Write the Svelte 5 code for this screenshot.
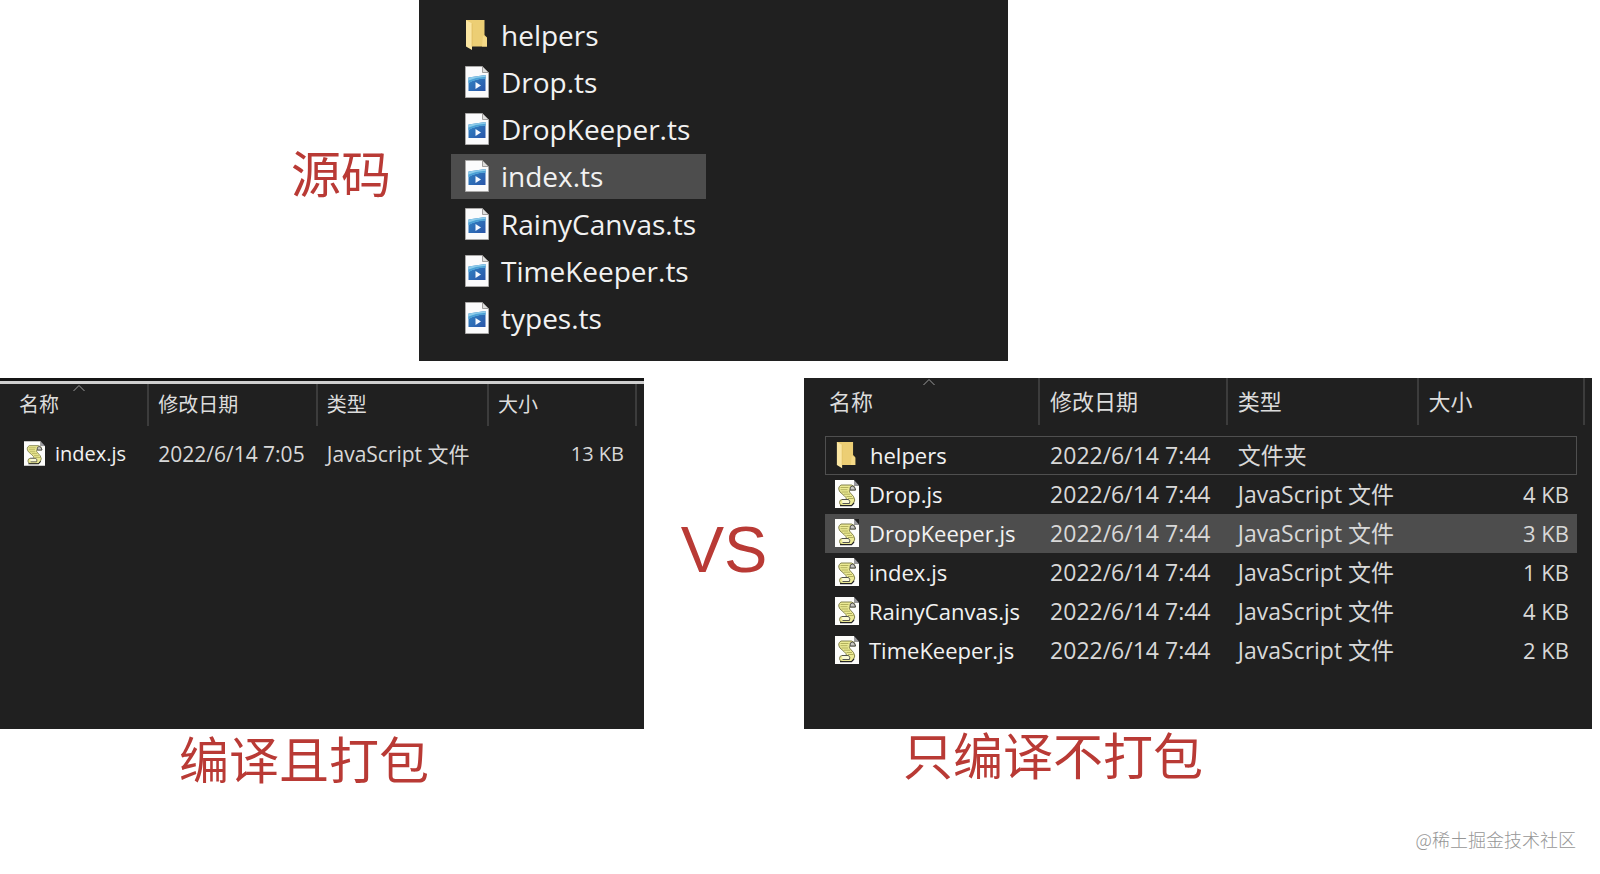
<script>
  const sources = [
    { name: 'helpers', folder: true },
    { name: 'Drop.ts' },
    { name: 'DropKeeper.ts' },
    { name: 'index.ts', active: true },
    { name: 'RainyCanvas.ts' },
    { name: 'TimeKeeper.ts' },
    { name: 'types.ts' }
  ];
  const js = 'JavaScript 文件';
  const bundled = [{ name: 'index.js', date: '2022/6/14 7:05', type: js, size: '13 KB' }];
  const compiled = [
    { name: 'helpers', date: '2022/6/14 7:44', type: '文件夹', size: '', folder: true, focused: true },
    { name: 'Drop.js', date: '2022/6/14 7:44', type: js, size: '4 KB' },
    { name: 'DropKeeper.js', date: '2022/6/14 7:44', type: js, size: '3 KB', active: true },
    { name: 'index.js', date: '2022/6/14 7:44', type: js, size: '1 KB' },
    { name: 'RainyCanvas.js', date: '2022/6/14 7:44', type: js, size: '4 KB' },
    { name: 'TimeKeeper.js', date: '2022/6/14 7:44', type: js, size: '2 KB' }
  ];
</script>

{#snippet folderIcon()}
  <svg class="icon" viewBox="0 0 24 32" preserveAspectRatio="xMinYMid meet" aria-hidden="true">
    <path d="M1 1H19.500V16L22 18.500V27.500H5Z" fill="#ecce74" />
    <path d="M18 16.500L22 19V27.500H17Z" fill="#f5da88" />
    <path d="M1 1L7 4.500V31L1 27.500Z" fill="#fbe6a2" />
    <path d="M7 4.500V27.500" stroke="#d9b452" stroke-width=".6" />
  </svg>
{/snippet}

{#snippet mediaIcon()}
  <svg class="icon" viewBox="0 0 24 32" aria-hidden="true">
    <defs>
      <linearGradient id="screen" x1="0" y1="0" x2="1" y2="1">
        <stop offset="0" stop-color="#3187c6" />
        <stop offset="1" stop-color="#2a55a8" />
      </linearGradient>
    </defs>
    <path d="M.5 .5H17.500L23.500 6.500V31.500H.5Z" fill="#fbfbfc" stroke="#aaa9a8" />
    <path d="M17.500 .5V6.500H23.500Z" fill="#dededd" stroke="#8b8987" stroke-width=".8" />
    <path d="M3.500 11.500L20.500 9V25H3.500Z" fill="url(#screen)" />
    <path d="M3.500 11.500L20.500 9V12.500Q11 12.500 3.500 17Z" fill="#8ccbea" />
    <path d="M3.500 14.500Q12 10.500 20.500 11V12.500Q11 12.500 3.500 17Z" fill="#4aa0d5" />
    <path d="M10.500 16L16 19.500L10.500 23Z" fill="#f4f9ff" />
  </svg>
{/snippet}

{#snippet scriptIcon()}
  <svg class="icon" viewBox="0 0 24 28" aria-hidden="true">
    <path d="M0 0H19L24 5.500V28H0Z" fill="#fdfdfb" />
    <path d="M19 0V5.500H24V0Z" fill="#202020" />
    <path d="M19 0V5.500H24Z" fill="#9a9a9e" />
    <path d="M6 5H16.500Q20 5.500 20.500 10H15.500Q13.500 10 14.500 12L18.500 16.500Q21 20 18.500 23.500L16.500 25.500H7Q4.500 25 4.500 22.500Q4.700 19.500 7 19.500H11.500Q11.500 17.500 9 15.500L5 12Q2 7.500 6 5Z" fill="#ecea94" stroke="#77763f" stroke-width=".9" />
    <path d="M5.500 7.500H13.500M5.500 9.700H12.500M6.500 12H13M9 14.200H15M11.500 16.500H17M13 18.500H18.500" stroke="#a3a14f" stroke-width=".8" />
    <path d="M15 10Q14.500 6 17.300 6Q20.300 6.500 20.500 10Z" fill="#c8c7c2" stroke="#3c3c3c" stroke-width=".9" />
    <path d="M7 19.500H13.500Q15.500 21 14.500 23.500H7.500" fill="#fbfad6" stroke="#444" stroke-width=".9" />
    <path d="M5 25.700H16.500L19 23" fill="none" stroke="#222" stroke-width="1.200" />
  </svg>
{/snippet}

{#snippet fileTable(rows, label)}
  <table aria-label={label}>
    <colgroup>
      <col class="c-name" /><col class="c-date" /><col class="c-type" /><col class="c-size" /><col class="c-end" />
    </colgroup>
    <thead>
      <tr>
        <th scope="col" aria-sort="ascending">
          <svg class="caret" viewBox="0 0 12 8" aria-hidden="true"><path d="M.5 7L6 1.500L11.500 7" fill="none" stroke="#9a9a9a" /></svg>
          名称
        </th>
        <th scope="col">修改日期</th>
        <th scope="col">类型</th>
        <th scope="col" colspan="2">大小</th>
      </tr>
    </thead>
    <tbody>
      {#each rows as row}
        <tr class:active={row.active} class:focused={row.focused}>
          <td>
            <span class="file">
              {#if row.folder}{@render folderIcon()}{:else}{@render scriptIcon()}{/if}
              {row.name}
            </span>
          </td>
          <td class="detail">{row.date}</td>
          <td class="detail">{row.type}</td>
          <td>{row.size}</td>
          <td></td>
        </tr>
      {/each}
    </tbody>
  </table>
{/snippet}

<main>
  <section class="top">
    <h2>源码</h2>
    <ul class="panel">
      {#each sources as item}
        <li class:active={item.active}>
          {#if item.folder}{@render folderIcon()}{:else}{@render mediaIcon()}{/if}
          {item.name}
        </li>
      {/each}
    </ul>
  </section>

  <section class="bottom">
    <figure class="bundled">
      <div class="panel">{@render fileTable(bundled, '编译且打包')}</div>
      <figcaption>编译且打包</figcaption>
    </figure>
    <p class="versus">VS</p>
    <figure class="compiled">
      <div class="panel">{@render fileTable(compiled, '只编译不打包')}</div>
      <figcaption>只编译不打包</figcaption>
    </figure>
  </section>

  <footer>@稀土掘金技术社区</footer>
</main>

<style>
  :global(body) {
    margin: 0;
    background: #fff;
  }

  main {
    font-family: 'Open Sans', 'Noto Sans CJK SC', sans-serif;
    color: #f2f2f2;
  }

  h2,
  figure,
  ul,
  p {
    margin: 0;
    padding: 0;
  }

  .panel {
    background: #202020;
  }

  .active {
    background: #4d4d4d;
  }

  h2,
  figcaption {
    color: #b93a35;
    font-family: 'Noto Sans CJK SC', sans-serif;
    font-size: 50px;
    font-weight: 400;
    line-height: 48px;
  }

  .top {
    display: grid;
    grid-template-columns: 419fr 589fr 592fr;
  }

  .top h2 {
    align-self: center;
    padding: 0 28px 20px 0;
    text-align: right;
  }

  .top ul {
    box-sizing: border-box;
    min-height: 361px;
    padding: 12px 32px 20px;
    list-style: none;
    display: flex;
    flex-direction: column;
    justify-content: space-between;
  }

  .top li {
    box-sizing: border-box;
    width: 255px;
    height: 45px;
    padding-left: 14px;
    display: flex;
    align-items: center;
    gap: 12px;
    font-size: 28px;
    line-height: 36px;
  }

  .icon {
    display: block;
    flex: none;
    width: 24px;
    height: 32px;
  }

  .bottom {
    display: grid;
    grid-template-columns: 644fr 160fr 788fr 8fr;
    margin-top: 17px;
  }

  .bottom .panel {
    box-sizing: border-box;
    min-height: 351px;
  }

  table {
    width: 100%;
    border-collapse: separate;
    border-spacing: 0;
    table-layout: fixed;
  }

  th {
    position: relative;
    box-sizing: border-box;
    padding: 0 10px 3px;
    border-right: 2px solid #3c3c3c;
    color: #dcdcdc;
    font-weight: 400;
    text-align: left;
  }

  .caret {
    position: absolute;
    top: 0;
    left: calc(50% - 6px);
    width: 12px;
    height: 8px;
  }

  tbody::before {
    content: '';
    display: block;
    height: 11px;
  }

  td {
    box-sizing: border-box;
    height: 39px;
    padding: 0 0 2px 10px;
    color: #d8d8d8;
    line-height: 30px;
    white-space: nowrap;
  }

  td:first-child {
    color: #f2f2f2;
  }

  td:nth-child(4) {
    padding: 0 8px 2px 0;
    text-align: right;
  }

  .file {
    display: flex;
    align-items: center;
    gap: 10px;
  }

  tr.active {
    background: none;
  }

  tr.active td:not(:last-child) {
    background: #4d4d4d;
  }

  .focused td:not(:last-child) {
    border: 0 solid #4f4f4f;
    border-top-width: 1px;
    border-bottom-width: 1px;
  }

  .focused td:first-child {
    border-left-width: 1px;
  }

  .focused td:nth-child(4) {
    border-right-width: 1px;
  }

  .c-end {
    width: 8px;
  }

  .bundled .panel {
    padding: 3px 7px 0 10px;
    border-top: 3px solid #151515;
    box-shadow: inset 0 3px #cfcfcf;
  }

  .bundled table {
    font-size: 20px;
  }

  .bundled .detail {
    font-size: 21px;
  }

  .bundled th,
  .bundled .detail {
    padding-left: 9px;
  }

  .bundled th {
    height: 42px;
  }

  .bundled tbody::before {
    height: 9px;
  }

  .bundled td:first-child {
    padding-left: 14px;
  }

  .bundled td:nth-child(4) {
    padding-right: 5px;
  }

  .bundled .icon {
    width: 21px;
    height: 25px;
  }

  .bundled .c-name {
    width: 22.200%;
  }

  .bundled .c-date {
    width: 26.900%;
  }

  .bundled .c-type {
    width: 27.300%;
  }

  .compiled .panel {
    padding: 0 7px 0 21px;
  }

  .compiled table {
    font-size: 22px;
  }

  .compiled .detail {
    font-size: 23px;
  }

  .compiled th {
    height: 47px;
  }

  .compiled th:first-child {
    padding-left: 4px;
  }

  .compiled .caret {
    left: calc(50% - 9px);
  }

  .compiled .icon {
    height: 28px;
  }

  .compiled .c-name {
    width: 28.300%;
  }

  .compiled .c-date {
    width: 24.700%;
  }

  .compiled .c-type {
    width: 25.100%;
  }

  figcaption {
    text-align: center;
  }

  .bundled figcaption {
    padding: 4px 36px 0 0;
  }

  .compiled figcaption {
    padding-right: 290px;
  }

  .versus {
    padding-top: 134px;
    color: #b93a35;
    font-family: 'Liberation Sans', Arial, sans-serif;
    font-size: 65px;
    line-height: 76px;
    text-align: center;
  }

  footer {
    padding: 44px 24px 0;
    color: #969696;
    font-family: 'Noto Sans CJK SC', sans-serif;
    font-size: 18px;
    font-weight: 300;
    line-height: 28px;
    text-align: right;
  }
</style>
